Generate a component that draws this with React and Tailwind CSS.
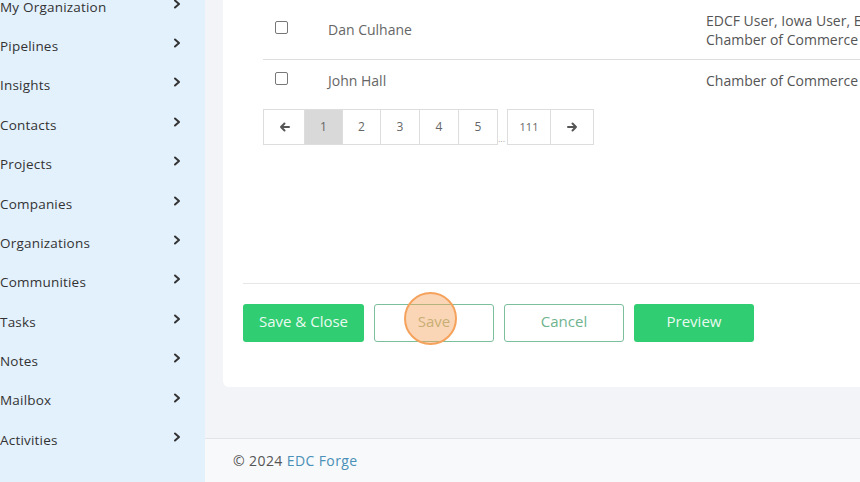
import React from "react";

const items = ["My Organization","Pipelines","Insights","Contacts","Projects","Companies","Organizations","Communities","Tasks","Notes","Mailbox","Activities"];

function Chevron() {
  return (
    <svg width="8" height="10" viewBox="0 0 8 10" className="mb-[6px]">
      <polyline points="2,1.5 6,5 2,8.5" fill="none" stroke="#333" strokeWidth="2" strokeLinecap="round" strokeLinejoin="round" />
    </svg>
  );
}

function Arrow({ dir }) {
  return (
    <svg width="11" height="10" viewBox="0 0 11 10">
      {dir === "left" ? (
        <path d="M10 5H2M5.5 1.5L2 5l3.5 3.5" fill="none" stroke="#555" strokeWidth="2" strokeLinecap="round" strokeLinejoin="round" />
      ) : (
        <path d="M1 5h8M5.5 1.5L9 5 5.5 8.5" fill="none" stroke="#555" strokeWidth="2" strokeLinecap="round" strokeLinejoin="round" />
      )}
    </svg>
  );
}

function Check() {
  return (
    <div className="w-[65px] shrink-0 flex pl-[12px] -mt-[4px]">
      <span className="w-[13px] h-[13px] border border-[#777] rounded-[2px] block" />
    </div>
  );
}

export default function App() {
  const font = { fontFamily: "'Open Sans', 'Liberation Sans', sans-serif" };
  return (
    <div className="w-[860px] h-[482px] overflow-hidden flex" style={font}>
      <aside className="w-[205px] shrink-0 bg-[#e3f1fd] overflow-hidden">
        <ul className="-mt-[13px]">
          {items.map((t) => (
            <li key={t} className="h-[39.4px] flex items-center justify-between pr-[24px] text-[13.5px] text-[#333] tracking-[0.2px]">
              <span className="whitespace-nowrap">{t}</span>
              <Chevron />
            </li>
          ))}
        </ul>
      </aside>
      <main className="flex-1 flex flex-col bg-[#f3f4f7] min-w-0 overflow-hidden">
        <section className="ml-[18px] w-[720px] h-[387px] shrink-0 bg-white rounded-bl-[6px] pl-[20px] flex flex-col">
          <div className="pl-[20px]">
            <div className="h-[60px] flex items-center border-b border-[#dedede] text-[14px] text-[#666]">
              <Check />
              <div className="w-[378px] shrink-0">Dan Culhane</div>
              <div className="whitespace-nowrap leading-[19px] text-[#555] shrink-0">EDCF User, Iowa User, EDC Admin<br />Chamber of Commerce</div>
            </div>
            <div className="h-[41px] flex items-center text-[14px] text-[#666]">
              <Check />
              <div className="w-[378px] shrink-0">John Hall</div>
              <div className="whitespace-nowrap text-[#555] shrink-0">Chamber of Commerce</div>
            </div>
            <div className="mt-[8px] flex items-end text-[12px] text-[#666]">
              <div className="flex h-[36px] border border-[#ddd]">
                <span className="w-[41px] flex items-center justify-center border-r border-[#ddd]"><Arrow dir="left" /></span>
                <span className="w-[38px] flex items-center justify-center border-r border-[#ddd] bg-[#d9d9d9]">1</span>
                <span className="w-[38px] flex items-center justify-center border-r border-[#ddd]">2</span>
                <span className="w-[39px] flex items-center justify-center border-r border-[#ddd]">3</span>
                <span className="w-[39px] flex items-center justify-center border-r border-[#ddd]">4</span>
                <span className="w-[38px] flex items-center justify-center">5</span>
              </div>
              <span className="w-[9px] text-[9px] leading-[10px] text-[#aaa] pb-[1px]">...</span>
              <div className="flex h-[36px] border border-[#ddd]">
                <span className="w-[43px] flex items-center justify-center border-r border-[#ddd] text-[11px]">111</span>
                <span className="w-[42px] flex items-center justify-center"><Arrow dir="right" /></span>
              </div>
            </div>
          </div>
          <div className="mt-[138px] border-t border-[#e6e6e6]" />
          <div className="mt-[20px] flex gap-[10px] text-[15px]">
            <button className="w-[121px] h-[38px] pb-[3px] rounded-[3px] bg-[#30cd72] text-[#eafaf0]">Save &amp; Close</button>
            <button className="relative w-[120px] h-[38px] pb-[3px] rounded-[3px] border border-[#7cbf9d] text-[#9fb88a]">
              Save
              <span className="absolute left-[29px] top-[-13px] w-[53px] h-[53px] rounded-full bg-[#f6a35e]/45 border-2 border-[#f4a25c]" />
            </button>
            <button className="w-[120px] h-[38px] pb-[3px] rounded-[3px] border border-[#7cbf9d] text-[#6fb38f]">Cancel</button>
            <button className="w-[120px] h-[38px] pb-[3px] rounded-[3px] bg-[#30cd72] text-[#eafaf0]">Preview</button>
          </div>
        </section>
        <div className="flex-1" />
        <footer className="h-[44px] shrink-0 border-t border-[#e2e3e6] bg-[#f8f9fa] flex items-center pl-[28px] text-[14px] tracking-[0.4px] text-[#555]">
          © 2024&nbsp;<span className="text-[#4a90b8]">EDC Forge</span>
        </footer>
      </main>
    </div>
  );
}
